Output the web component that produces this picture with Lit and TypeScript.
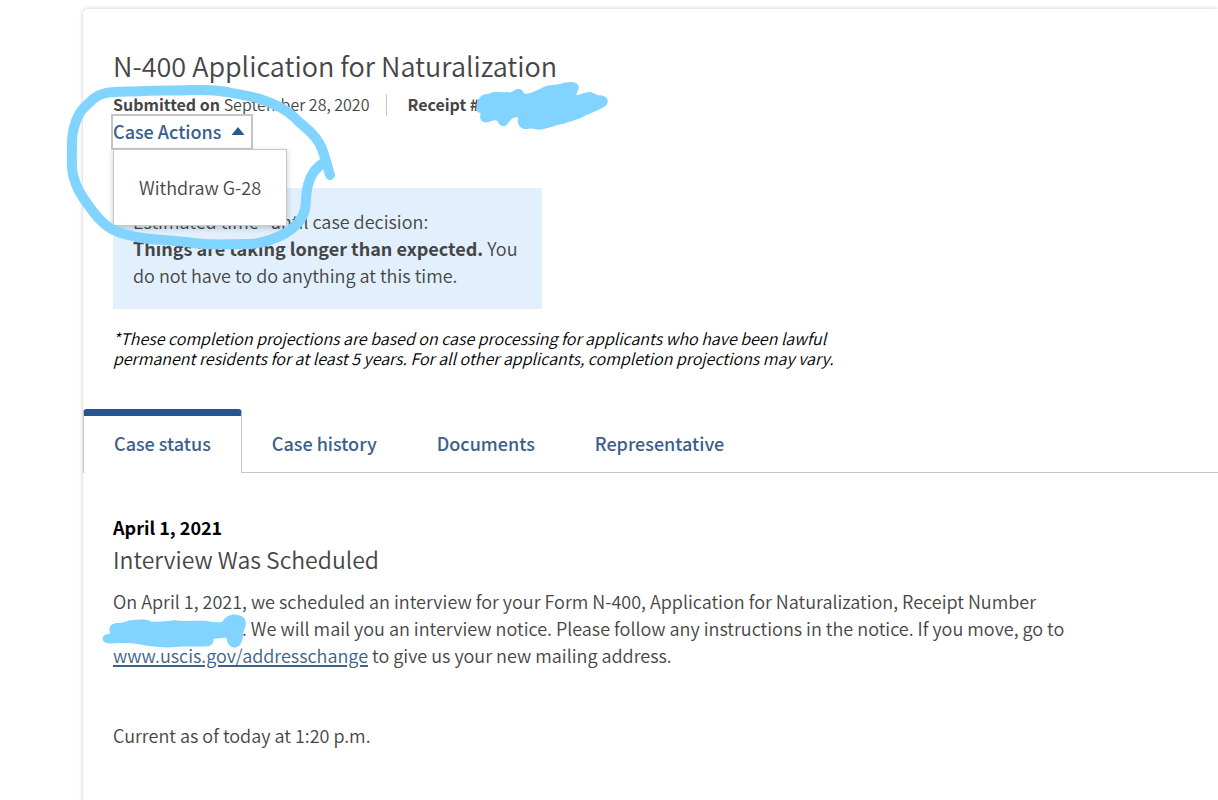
import { LitElement, html, css } from "lit";
import { customElement, state } from "lit/decorators.js";

const TABS = ["Case status", "Case history", "Documents", "Representative"];

@customElement("app-root")
export class AppRoot extends LitElement {
  @state() private menuOpen = true;
  @state() private activeTab = 0;

  static styles = css`
    :host {
      display: block;
      height: 100vh;
      overflow: hidden;
      box-sizing: border-box;
      padding: 9px 0 0 83px;
      background: #fff;
      color: #454545;
      font-family: "Noto Sans CJK SC", "Source Sans Pro", sans-serif;
      font-size: 18px;
      font-weight: 350;
      line-height: 27px;
    }
    * {
      box-sizing: border-box;
    }
    h1, h2, p {
      margin: 0;
      font-weight: inherit;
    }
    button {
      font: inherit;
      color: inherit;
      background: none;
      border: 0;
      padding: 0;
      cursor: pointer;
    }
    b {
      font-weight: 700;
    }
    .card {
      min-height: 100vh;
      border-top-left-radius: 5px;
      box-shadow: 0 0 4px rgba(0, 0, 0, 0.22);
    }
    .summary {
      padding: 40px 30px 40px;
    }
    h1 {
      font-size: 27px;
      line-height: 34px;
    }
    .meta {
      display: flex;
      margin-top: 11px;
      font-size: 16px;
      line-height: 20px;
      height: 22px;
    }
    .receipt {
      position: relative;
      margin-left: 17px;
      padding-left: 20px;
      border-left: 1px solid #c4c6c9;
    }
    .actions {
      position: relative;
      width: max-content;
    }
    .toggle {
      display: flex;
      align-items: center;
      gap: 10px;
      width: 138px;
      height: 32px;
      padding-bottom: 2px;
      outline: 2px solid #c3c5c8;
      color: #35608f;
      font-weight: 500;
    }
    .menu {
      position: absolute;
      z-index: 1;
      top: 33px;
      left: 0;
      padding: 24px 25px;
      border: 1px solid #c6c8ca;
      background: #fff;
      box-shadow: 0 2px 6px rgba(0, 0, 0, 0.2);
      white-space: nowrap;
    }
    .estimate {
      max-width: 429px;
      margin-top: 40px;
      padding: 20px;
      background: #e2f0fd;
    }
    .note {
      max-width: 730px;
      margin-top: 19px;
      color: #000;
      font-size: 16px;
      line-height: 20px;
      font-style: italic;
    }
    .tabs {
      display: flex;
      margin-top: 1px;
      border-bottom: 1px solid #c4c6c9;
    }
    .tab {
      height: 63px;
      padding: 7px 30px 2px;
      color: #3c6088;
      font-weight: 500;
    }
    .tab[aria-selected="true"] {
      height: 64px;
      margin-bottom: -1px;
      padding: 0 30px 3px;
      border: 1px solid #c4c6c9;
      border-top: 7px solid #27558f;
      border-bottom: 0;
      border-radius: 4px 4px 0 0;
      background: #fff;
    }
    .panel {
      padding: 41px 30px;
    }
    .date {
      color: #000;
      font-weight: 700;
      line-height: 27px;
    }
    h2 {
      font-size: 23px;
      line-height: 36px;
    }
    .message {
      max-width: 980px;
      margin-top: 11px;
    }
    .message a {
      color: #3a6285;
      text-decoration-thickness: 2px;
      text-underline-offset: 2px;
    }
    .current {
      margin-top: 53px;
    }
    .number {
      position: relative;
      display: inline-block;
      width: 129px;
      height: 20px;
      vertical-align: middle;
    }
    .ink {
      position: absolute;
      z-index: 2;
      overflow: visible;
      pointer-events: none;
      fill: #80d4ff;
    }
    .loop {
      top: -32px;
      left: -53px;
      fill: none;
      stroke: #80d4ff;
      stroke-width: 10;
      stroke-linecap: round;
      stroke-linejoin: round;
    }
    .receipt-ink {
      top: -14px;
      left: 86px;
    }
    .number-ink {
      top: -8px;
      left: -13px;
    }
  `;

  render() {
    return html`
      <main class="card">
        <header class="summary">
          <h1>N-400 Application for Naturalization</h1>
          <div class="meta">
            <span><b>Submitted on</b> September 28, 2020</span>
            <span class="receipt">
              <b>Receipt #</b>
              <svg class="ink receipt-ink" width="140" height="53" viewBox="400 120 420 159" aria-hidden="true">
                <path d="M410 205C409 180 424 160 446 162C462 153 480 158 500 156C512 160 518 155 524 151C535 144 551 147 552 160C570 164 585 154 605 145C624 133 638 136 660 132C684 124 711 122 717 139C720 149 710 156 710 166C725 163 738 155 752 156C762 157 767 166 779 166C797 166 808 176 803 190C800 202 770 212 748 222C714 240 682 249 650 256C630 262 610 272 588 268C577 262 566 268 552 267C536 262 532 247 535 232C519 229 510 243 501 255C490 263 477 257 474 244C466 234 454 248 434 247C420 243 420 230 423 220C413 217 409 212 410 205Z" />
              </svg>
            </span>
          </div>
          <div class="actions">
            <button
              class="toggle"
              aria-haspopup="true"
              aria-expanded=${this.menuOpen}
              @click=${() => (this.menuOpen = !this.menuOpen)}
            >
              Case Actions
              <svg width="14" height="8" viewBox="0 0 14 8" aria-hidden="true">
                <path d="M0.5 8L7 0L13.5 8Z" fill="#2a5a92" />
              </svg>
            </button>
            ${this.menuOpen
              ? html`<div class="menu"><button>Withdraw G-28</button></div>`
              : null}
            <svg class="ink loop" width="280" height="170" viewBox="60 84 280 170" aria-hidden="true">
              <path d="M330 175C328 170 328 166 326 161C322 148 321 145 315 137C307 127 302 126 294 117C286 109 275 104 260 99C248 95 240 95 227 92C212 89 202 90 190 90C174 91 162 90 143 91C130 92 118 91 106 93C98 95 95 97 90 102C82 109 79 113 76 121C72 132 72 138 72 148C72 160 71 165 73 175C76 187 80 193 86 202C94 213 98 219 107 226C115 232 124 234 136 237C153 240 170 240 186 242C207 246 225 244 243 244C260 245 273 240 286 233C297 226 303 219 305 209C307 199 305 196 308 185C310 176 314 169 326 161" />
            </svg>
          </div>
          <p class="estimate">
            Estimated time* until case decision:<br />
            <b>Things are taking longer than expected.</b>
            You do not have to do anything at this time.
          </p>
          <p class="note">
            *These completion projections are based on case processing for applicants who have been
            lawful permanent residents for at least 5 years. For all other applicants, completion
            projections may vary.
          </p>
        </header>
        <div class="tabs" role="tablist">
          ${TABS.map(
            (label, i) => html`<button
              class="tab"
              role="tab"
              aria-selected=${this.activeTab === i}
              @click=${() => (this.activeTab = i)}
            >${label}</button>`
          )}
        </div>
        <section class="panel" role="tabpanel">
          <p class="date">April 1, 2021</p>
          <h2>Interview Was Scheduled</h2>
          <p class="message">
            On April 1, 2021, we scheduled an interview for your Form N-400, Application for
            Naturalization, Receipt Number
            <span class="number"><svg class="ink number-ink" width="150" height="37" viewBox="30 100 450 111" aria-hidden="true">
              <path d="M60 158C54 140 66 129 84 130C103 130 115 119 140 120C163 119 174 119 184 126C207 128 230 124 254 122C285 126 324 122 350 124C372 127 385 130 397 126C407 111 421 103 440 105C461 107 470 121 467 137C464 151 459 156 459 165C458 181 454 201 435 204C417 202 411 188 409 174C396 174 382 176 371 178C371 191 364 201 348 200C320 202 297 199 266 201C233 206 204 202 181 200C157 195 126 189 91 190C69 190 51 195 40 184C33 174 41 163 60 162Z" /></svg></span>. We will mail you an interview notice. Please follow any instructions in the notice.
            If you move, go to <a href="#addresschange">www.uscis.gov/addresschange</a> to give us
            your new mailing address.
          </p>
          <p class="current">Current as of today at 1:20 p.m.</p>
        </section>
      </main>
    `;
  }
}
